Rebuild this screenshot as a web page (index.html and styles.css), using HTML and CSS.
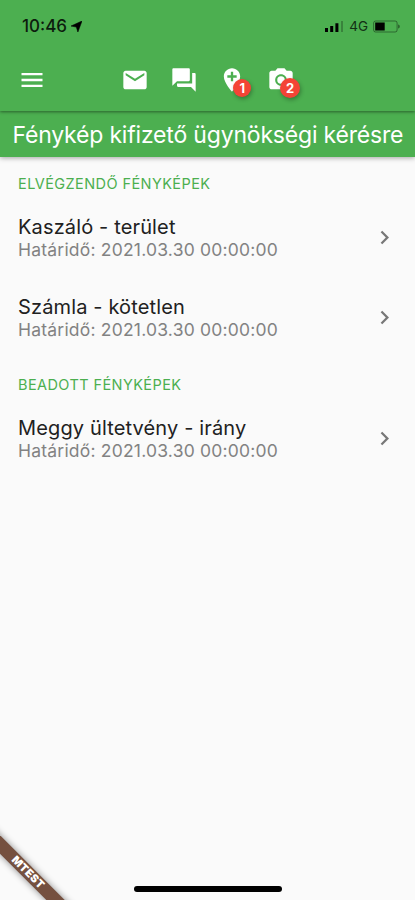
FILE: index.html
```
<!DOCTYPE html>
<html lang="hu">
<head>
    <meta charset="UTF-8">
    <meta name="viewport" content="width=device-width, initial-scale=1.0">
    <title>Fényképek</title>
    <link rel="stylesheet" href="styles.css">
</head>
<body>

    <header class="app-bar">
        <div class="status-bar">
            <span class="clock">10:46</span>
            <svg class="location" viewBox="0 0 12 12"><path d="M12 0 7.500 12 5.800 6.600 0 5.500z" stroke="#000" stroke-width=".6"/></svg>
            <svg class="signal" viewBox="0 0 19 12">
                <path d="M0 8h3v4H0zM5.200 6h3v6h-3zM10.400 3.200h3V12h-3z"/>
                <path d="M16 1h2v11h-2z" opacity=".25"/>
            </svg>
            <span class="network">4G</span>
            <svg class="battery" viewBox="0 0 28 13">
                <rect x=".6" y="1" width="23.500" height="11" rx="2" fill="none" stroke="#000" stroke-opacity=".4"/>
                <rect x="2.200" y="2.500" width="9.500" height="8"/>
                <path d="M25.200 4.500c2 .5 2 3.500 0 4z" opacity=".5"/>
            </svg>
        </div>
        <nav class="toolbar">
            <a class="tool menu"><svg viewBox="0 0 24 24"><path d="M3 18h18v-2H3v2zm0-5h18v-2H3v2zm0-7v2h18V6H3z"/></svg></a>
            <a class="tool"><svg viewBox="0 0 24 24"><path d="M20 4H4c-1.100 0-1.990.9-1.990 2L2 18c0 1.100.9 2 2 2h16c1.100 0 2-.9 2-2V6c0-1.100-.9-2-2-2zm0 4l-8 5-8-5V6l8 5 8-5v2z"/></svg></a>
            <a class="tool"><svg viewBox="0 0 24 24"><path d="M21 6h-2v9H6v2c0 .55.45 1 1 1h11l4 4V7c0-.55-.45-1-1-1zm-4 6V3c0-.55-.45-1-1-1H3c-.55 0-1 .45-1 1v14l4-4h10c.55 0 1-.45 1-1z"/></svg></a>
            <a class="tool">
                <svg viewBox="0 0 24 24"><path d="M12 2C8.140 2 5 5.140 5 9c0 5.250 7 13 7 13s7-7.750 7-13c0-3.860-3.140-7-7-7zm4 8h-3v3h-2v-3H8V8h3V5h2v3h3v2z"/></svg>
                <span class="badge">1</span>
            </a>
            <a class="tool">
                <svg viewBox="0 0 24 24"><circle cx="12" cy="12" r="3.200"/><path d="M9 2L7.170 4H4c-1.100 0-2 .9-2 2v12c0 1.100.9 2 2 2h16c1.100 0 2-.9 2-2V6c0-1.100-.9-2-2-2h-3.170L15 2H9zm3 15c-2.760 0-5-2.240-5-5s2.240-5 5-5 5 2.240 5 5-2.240 5-5 5z"/></svg>
                <span class="badge large">2</span>
            </a>
        </nav>
    </header>

    <h1 class="page-title">Fénykép kifizető ügynökségi kérésre</h1>

    <main class="content">
        <h2 class="section-title todo">ELVÉGZENDŐ FÉNYKÉPEK</h2>
        <div class="item">
            <div class="item-text">
                <div class="item-name">Kaszáló - terület</div>
                <div class="item-deadline">Határidő: 2021.03.30 00:00:00</div>
            </div>
            <svg class="chevron" viewBox="0 0 24 24"><path d="M10 6L8.590 7.410 13.170 12l-4.580 4.590L10 18l6-6z"/></svg>
        </div>
        <div class="item">
            <div class="item-text">
                <div class="item-name">Számla - kötetlen</div>
                <div class="item-deadline">Határidő: 2021.03.30 00:00:00</div>
            </div>
            <svg class="chevron" viewBox="0 0 24 24"><path d="M10 6L8.590 7.410 13.170 12l-4.580 4.590L10 18l6-6z"/></svg>
        </div>

        <h2 class="section-title sent">BEADOTT FÉNYKÉPEK</h2>
        <div class="item">
            <div class="item-text">
                <div class="item-name">Meggy ültetvény - irány</div>
                <div class="item-deadline">Határidő: 2021.03.30 00:00:00</div>
            </div>
            <svg class="chevron" viewBox="0 0 24 24"><path d="M10 6L8.590 7.410 13.170 12l-4.580 4.590L10 18l6-6z"/></svg>
        </div>
    </main>

    <div class="ribbon">MTEST</div>
    <div class="home-indicator"></div>

</body>
</html>
```

FILE: styles.css
```
* {
    box-sizing: border-box;
}
body {
    margin: 0;
    height: 900px;
    display: flex;
    flex-direction: column;
    position: relative;
    overflow: hidden;
    background: #fafafa;
    font-family: Inter, sans-serif;
}
svg {
    display: block;
    flex: none;
}
.app-bar {
    height: 111px;
    background: #4caf50;
    position: relative;
    z-index: 2;
    box-shadow: 0 1px 3px rgba(0, 0, 0, 0.45);
}
.status-bar {
    height: 52px;
    padding: 0 14px 0 22px;
    display: flex;
    align-items: center;
}
.clock {
    font-size: 17px;
    font-weight: 500;
    line-height: 20px;
    color: #0c1c0d;
}
.location {
    width: 11px;
    height: 11px;
    margin-left: 4px;
}
.signal {
    width: 19px;
    height: 12px;
    margin-left: auto;
}
.network {
    margin: 0 5px;
    font-size: 13.5px;
    line-height: 20px;
    color: #123014;
}
.battery {
    width: 28px;
    height: 13px;
}
.toolbar {
    height: 56px;
    padding-left: 17.5px;
    display: flex;
    align-items: center;
    gap: 20.8px;
}
.tool {
    width: 28px;
    height: 28px;
    position: relative;
}
.tool svg {
    width: 28px;
    height: 28px;
    fill: #fff;
}
.tool.menu {
    margin-right: 54.5px;
}
.badge {
    position: absolute;
    left: 15px;
    top: 13px;
    width: 18px;
    height: 18px;
    border-radius: 50%;
    background: #f44336;
    color: #fff;
    font-size: 13px;
    font-weight: 700;
    line-height: 18px;
    text-align: center;
    box-shadow: 1px 2px 4px rgba(0, 0, 0, 0.3);
}
.badge.large {
    left: 13px;
    top: 12px;
    width: 20px;
    height: 20px;
    line-height: 20px;
}
.page-title {
    margin: 0;
    height: 46px;
    padding-left: 12.5px;
    background: #4caf50;
    box-shadow: 0 1px 5px rgba(0, 0, 0, 0.35);
    color: #fff;
    font-size: 23px;
    font-weight: 400;
    letter-spacing: -0.19px;
    line-height: 48px;
    white-space: nowrap;
}
.content {
    padding: 0 17px 0 18px;
}
.section-title {
    margin: 0 0 2px;
    font-size: 14.5px;
    font-weight: 400;
    letter-spacing: 0.42px;
    line-height: 18px;
    color: #4caf50;
}
.section-title.todo {
    padding-top: 18px;
}
.section-title.sent {
    padding-top: 21px;
}
.item {
    height: 80px;
    padding-top: 4px;
    display: flex;
    align-items: center;
    justify-content: space-between;
}
.item-text {
    margin-top: 1px;
}
.item-name {
    font-size: 20px;
    letter-spacing: 0.14px;
    line-height: 23px;
    color: #212121;
}
.item-deadline {
    font-size: 17.5px;
    letter-spacing: 0.21px;
    line-height: 21px;
    color: #828282;
}
.chevron {
    width: 27px;
    height: 27px;
    fill: #777;
}
.ribbon {
    position: absolute;
    left: -42px;
    bottom: 21px;
    width: 140px;
    height: 13px;
    background: #75503f;
    color: #fff;
    font-size: 11px;
    font-weight: 900;
    letter-spacing: 0.3px;
    line-height: 13px;
    text-align: center;
    transform: rotate(45deg);
    box-shadow: 0 0 7px rgba(0, 0, 0, 0.45);
}
.home-indicator {
    position: absolute;
    left: 134px;
    bottom: 8px;
    width: 148px;
    height: 6px;
    border-radius: 3px;
    background: #000;
}
```
